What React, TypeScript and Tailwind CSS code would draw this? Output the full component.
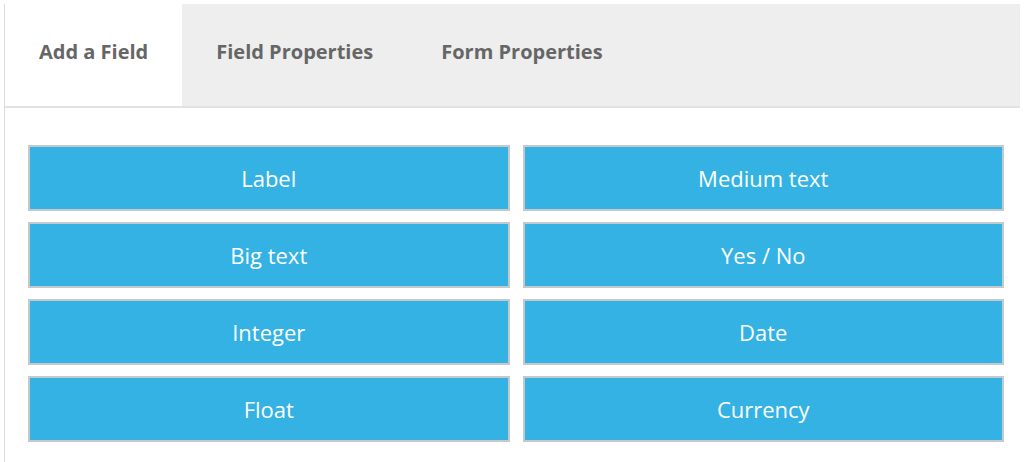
import React, { useState } from 'react';

const tabs = ['Add a Field', 'Field Properties', 'Form Properties'];

const fields = [
  'Label',
  'Medium text',
  'Big text',
  'Yes / No',
  'Integer',
  'Date',
  'Float',
  'Currency',
];

export default function App() {
  const [active, setActive] = useState(0);

  return (
    <div className="h-[462px] w-[1024px] overflow-hidden bg-white pt-1 pl-1 font-['Open_Sans',sans-serif]">
      <div className="h-full w-[1016px] border-l border-[#dcdcdc]">
        <div className="flex h-[104px] border-b-2 border-[#e2e2e2] bg-[#eeeeee]">
          {tabs.map((tab, i) => (
            <button
              key={tab}
              type="button"
              onClick={() => setActive(i)}
              className={
                'px-[34px] pb-[6px] text-[20px] font-bold text-[#666666] ' +
                (i === active ? 'bg-white' : 'bg-transparent')
              }
            >
              {tab}
            </button>
          ))}
        </div>

        <div className="grid grid-cols-2 gap-x-[13px] gap-y-[11px] pt-[37px] pr-[16px] pl-[23px]">
          {fields.map((field) => (
            <button
              key={field}
              type="button"
              className="h-[66px] border-2 border-[#c4c9cc] bg-[#33b2e3] text-[22px] font-medium text-white"
            >
              {field}
            </button>
          ))}
        </div>
      </div>
    </div>
  );
}
